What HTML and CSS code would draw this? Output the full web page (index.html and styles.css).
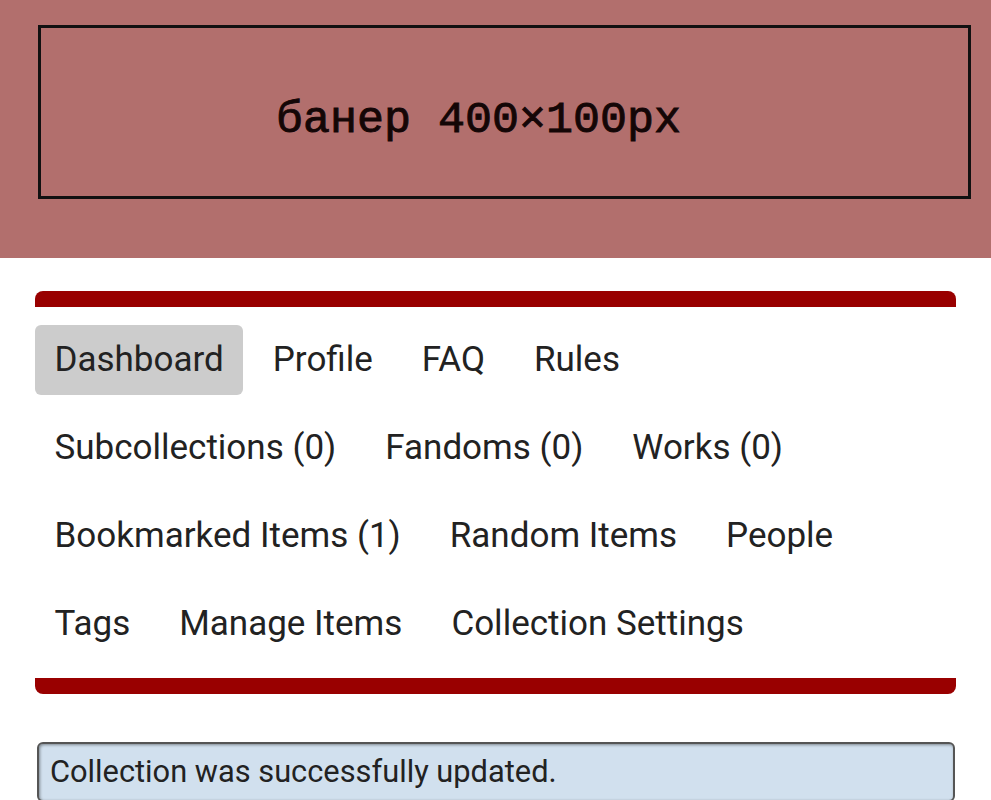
FILE: index.html
```html
<!DOCTYPE html>
<html lang="en">
<head>
  <meta charset="UTF-8">
  <meta name="viewport" content="width=device-width, initial-scale=1.0">
  <title>Collection Dashboard</title>
  <link rel="stylesheet" href="styles.css">
</head>
<body>
  <header class="band">
    <div class="banner">банер 400×100px</div>
  </header>
  <main class="page">
    <div class="bar bar-top"></div>
    <ul class="nav">
      <li class="current">Dashboard</li>
      <li>Profile</li>
      <li>FAQ</li>
      <li>Rules</li>
      <li>Subcollections (0)</li>
      <li>Fandoms (0)</li>
      <li>Works (0)</li>
      <li>Bookmarked Items (1)</li>
      <li>Random Items</li>
      <li>People</li>
      <li>Tags</li>
      <li>Manage Items</li>
      <li>Collection Settings</li>
    </ul>
    <div class="bar bar-bottom"></div>
    <div class="notice">Collection was successfully updated.</div>
  </main>
</body>
</html>
```

FILE: styles.css
```css
body {
  margin: 0;
  font-family: Roboto, "Liberation Sans", sans-serif;
  color: #222;
  background: #fff;
}
.band {
  background-color: #b26f6d;
  height: 258px;
  padding: 25px 20px 0 38px;
  box-sizing: border-box;
}
.banner {
  height: 174px;
  border: 3px solid #111;
  box-sizing: border-box;
  display: flex;
  justify-content: center;
  align-items: center;
  font-family: "Liberation Mono", monospace;
  font-size: 45px;
  color: #140606;
  -webkit-text-stroke: 0.9px #140606;
  padding: 16px 52px 0 0;
}
.page {
  padding: 33px 35px 0;
}
.bar {
  height: 16px;
  background-color: #990000;
}
.bar-top {
  border-radius: 8px 8px 0 0;
}
.bar-bottom {
  border-radius: 0 0 8px 8px;
}
.nav {
  list-style: none;
  margin: 0;
  padding: 18px 0 19px;
  display: flex;
  flex-wrap: wrap;
  column-gap: 10px;
  row-gap: 18px;
}
.nav li {
  height: 70px;
  line-height: 70px;
  padding: 0 19.5px;
  font-size: 35px;
  border-radius: 6px;
}
.nav li.current {
  background-color: #cccccc;
}
.notice {
  margin: 48px 1px 0 2px;
  background-color: #d1e0ee;
  border: 2px solid #555;
  border-radius: 6px;
  box-shadow: inset 1px 1px 3px rgba(0, 0, 0, 0.4);
  padding: 8px 11px;
  font-size: 30.8px;
  line-height: 40px;
}
```
